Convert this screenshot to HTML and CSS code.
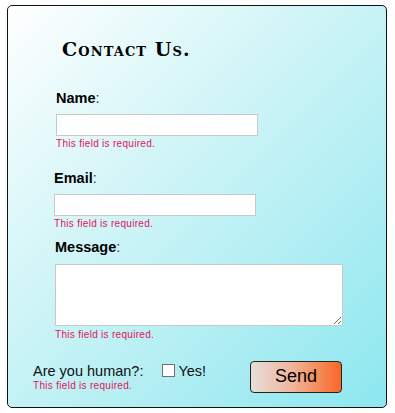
FILE: index.html
```html
<!DOCTYPE html>
<html>
<head>
<meta charset="utf-8">
<link rel="stylesheet" href="styles.css">
</head>
<body>
<form class="contact">
  <h1 class="title">Contact Us.</h1>
  <div class="field field-name">
    <label class="label"><b>Name</b>:</label>
    <input class="input" type="text">
    <div class="error">This field is required.</div>
  </div>
  <div class="field field-email">
    <label class="label"><b>Email</b>:</label>
    <input class="input" type="text">
    <div class="error">This field is required.</div>
  </div>
  <div class="field field-message">
    <label class="label"><b>Message</b>:</label>
    <textarea class="textarea"></textarea>
    <div class="error">This field is required.</div>
  </div>
  <div class="bottom">
    <div class="human">
      <div class="human-row">
        <span class="human-q">Are you human?:</span>
        <input class="check" type="checkbox">
        <span class="yes">Yes!</span>
      </div>
      <div class="error">This field is required.</div>
    </div>
    <button class="send" type="button">Send</button>
  </div>
</form>
</body>
</html>
```
FILE: styles.css
```css
html, body {
  margin: 0;
  padding: 0;
  background: #ffffff;
}
body {
  font-family: "Liberation Sans", Arial, sans-serif;
  color: #000;
}
.contact {
  margin: 5px 0 0 7px;
  width: 378px;
  height: 401px;
  border: 1px solid #111;
  border-radius: 5px;
  background: linear-gradient(135deg, #ffffff 0%, #d6f6f8 35%, #b1eef3 68%, #8de7ef 100%);
  box-sizing: content-box;
  display: flex;
  flex-direction: column;
}
.title {
  margin: 33px 0 0 54px;
  font-family: "DejaVu Serif", "Liberation Serif", serif;
  font-weight: bold;
  font-variant: small-caps;
  font-size: 19px;
  line-height: 20px;
  letter-spacing: 1.1px;
  color: #000;
}
.field {
  display: flex;
  flex-direction: column;
  align-items: flex-start;
}
.field-name { margin: 31px 0 0 48px; }
.field-email { margin: 20px 0 0 46px; }
.field-message { margin: 9px 0 0 47px; }
.label {
  font-size: 14.5px;
  line-height: 16px;
  color: #333;
}
.label b {
  color: #000;
}
.input {
  margin: 8px 0 0 0;
  width: 202px;
  height: 22px;
  box-sizing: border-box;
  border: 1px solid #c8c8c8;
  background: #fff;
  padding: 0;
  outline: none;
}
.textarea {
  margin: 9px 0 0 0;
  width: 288px;
  height: 62px;
  box-sizing: border-box;
  border: 1px solid #c8c8c8;
  background: #fff;
  padding: 0;
  resize: both;
}
.error {
  margin-top: 2px;
  font-size: 10px;
  line-height: 12px;
  letter-spacing: 0.3px;
  color: #e2135a;
}
.field-message .error { margin-top: 3px; }
.bottom {
  margin: 20px 0 0 25px;
  display: flex;
  align-items: flex-start;
}
.human {
  display: flex;
  flex-direction: column;
  padding-top: 1px;
}
.human-row {
  display: flex;
  align-items: center;
  font-size: 14.5px;
  line-height: 18px;
  color: #111;
}
.human .error {
  margin-top: 0;
}
.check {
  -webkit-appearance: none;
  appearance: none;
  margin: 0 3px 0 19px;
  width: 13px;
  height: 13px;
  border: 1px solid #707070;
  background: #fff;
  box-sizing: border-box;
  position: relative;
  top: -1px;
}
.send {
  margin-left: auto;
  margin-right: 44px;
  width: 92px;
  height: 32px;
  border: 1px solid #222;
  border-radius: 4px;
  background: linear-gradient(90deg, #e6dedb 0%, #efb69c 45%, #f6844f 80%, #f9672a 100%);
  font-family: "Liberation Sans", Arial, sans-serif;
  font-size: 18px;
  color: #000;
  padding: 0 0 2px 0;
  cursor: pointer;
}
```
